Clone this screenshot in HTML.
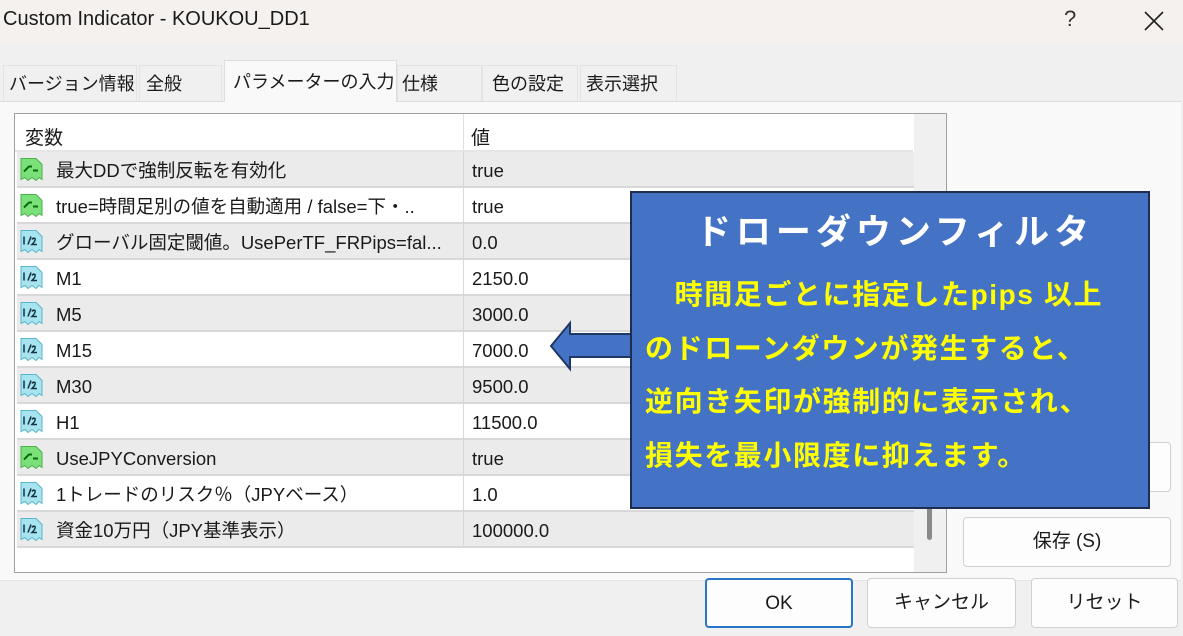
<!DOCTYPE html>
<html><head><meta charset="utf-8"><style>
*{margin:0;padding:0;box-sizing:border-box}
body{width:1183px;height:636px;overflow:hidden;background:#f0f0f0;font-family:"Liberation Sans","Noto Sans CJK JP",sans-serif;position:relative;color:#1a1a1a}
.a{position:absolute}
.title{left:0;top:0;width:1183px;height:45px;background:#f5f1ee}
.tab{position:absolute;top:65px;height:36px;background:#f0f0f0;border:1px solid #e3e3e3;border-bottom:none;font-size:18px;line-height:36px;padding-left:6px;white-space:nowrap;overflow:hidden}
.panel{left:0;top:101px;width:1181px;height:480px;background:#f9f9f9;border-top:1px solid #ddd;border-bottom:1px solid #e6e6e6}
.tbl{left:14px;top:113px;width:933px;height:460px;background:#fff;border:1px solid #a0a0a0}
.row{position:absolute;left:2px;width:897px;height:36px;font-size:18.5px;line-height:38px;border-bottom:2px solid #d8d8d8}
.row .n{position:absolute;left:39px}
.row .v{position:absolute;left:455px}
.row .sep{position:absolute;left:446px;top:0;width:1px;height:36px;background:#d8d8d8}
.g{background:#ebebeb}
.ic{position:absolute;left:3px;top:5px;width:23px;height:25px}
.btn{position:absolute;background:#fdfdfd;border:1px solid #d0d0d0;border-radius:4px;font-size:19px;text-align:center;line-height:48px}
</style></head><body>
<div class="a title"></div>
<div class="a" style="left:3px;top:8px;font-size:20px">Custom Indicator - KOUKOU_DD1</div>
<div class="a" style="left:1064px;top:6px;font-size:22px;color:#333">?</div>
<svg class="a" style="left:1143px;top:10px" width="22" height="22"><path d="M2 2L20 20M20 2L2 20" stroke="#222" stroke-width="1.6"/></svg>

<div class="tab" style="left:3px;width:134px;padding-left:5px">バージョン情報</div>
<div class="tab" style="left:139px;width:83px">全般</div>
<div class="tab" style="left:397px;width:85px;padding-left:4px">仕様</div>
<div class="tab" style="left:482px;width:96px;padding-left:9px">色の設定</div>
<div class="tab" style="left:580px;width:97px;padding-left:5px">表示選択</div>
<div class="a panel"></div>
<div class="tab" style="left:224px;top:60px;height:42px;width:173px;background:#f9f9f9;padding-left:8px;line-height:42px;border-color:#ddd">パラメーターの入力</div>

<div class="a tbl">
<div class="a" style="left:0;top:0;width:898px;height:38px;border-bottom:2px solid #e6e6e6"></div>
<div class="a" style="left:10px;top:9px;font-size:19px">変数</div>
<div class="a" style="left:448px;top:0;width:1px;height:38px;background:#e0e0e0"></div>
<div class="a" style="left:456px;top:9px;font-size:19px">値</div>
<div class="a" style="left:899px;top:0;width:32px;height:458px;background:#f0f0f0"></div>
<div class="a" style="left:912px;top:390px;width:5px;height:36px;background:#8a8a8a;border-radius:3px"></div>
<div id="rows"></div>
</div>

<div class="btn" style="left:963px;top:442px;width:208px;height:50px"></div>
<div class="btn" style="left:963px;top:517px;width:208px;height:50px">保存 (S)</div>
<div class="btn" style="left:705px;top:578px;width:148px;height:50px;border:2px solid #2a74c8">OK</div>
<div class="btn" style="left:867px;top:578px;width:149px;height:50px">キャンセル</div>
<div class="btn" style="left:1031px;top:578px;width:147px;height:50px">リセット</div>

<svg class="a" style="left:548px;top:320px" width="90" height="52"><path d="M3 26L22 3V14H84V37H22V49Z" fill="#4472c4" stroke="#1f3864" stroke-width="2"/></svg>
<div class="a" style="left:630px;top:191px;width:520px;height:318px;background:#4472c4;border:2px solid #1f2d4f"></div>
<div class="a" style="left:630px;top:204px;width:520px;text-align:center;font-size:35px;font-weight:bold;color:#fff;letter-spacing:5px;padding-left:10px">ドローダウンフィルタ</div>
<div class="a" style="left:645px;top:268px;width:520px;font-size:28px;font-weight:bold;color:#ffff00;line-height:53.5px;white-space:nowrap;letter-spacing:1.6px">　時間足ごとに指定したpips 以上<br>のドローンダウンが発生すると、<br>逆向き矢印が強制的に表示され、<br>損失を最小限度に抑えます。</div>

<script>
var G='<path d="M1 1H16L22 7V22L19 20L16 23L12 20L8 23L5 20L1 22Z" fill="#79e07a" stroke="#4cb04c"/><path d="M4 14L9 9H12M13 13H18" stroke="#0a6a0a" stroke-width="2" fill="none"/>';
var B='<path d="M1 1H16L22 7V22L19 20L16 23L12 20L8 23L5 20L1 22Z" fill="#a8e4f0" stroke="#58b5cc"/><path d="M4 7V15M8 15L11 7" stroke="#134" stroke-width="1.5" fill="none"/><path d="M12 10Q13 8 15 9Q16 11 12 15H17" stroke="#134" stroke-width="1.5" fill="none"/>';
var d=[["b","最大DDで強制反転を有効化","true"],["b","true=時間足別の値を自動適用 / false=下・..","true"],["d","グローバル固定閾値。UsePerTF_FRPips=fal...","0.0"],["d","M1","2150.0"],["d","M5","3000.0"],["d","M15","7000.0"],["d","M30","9500.0"],["d","H1","11500.0"],["b","UseJPYConversion","true"],["d","1トレードのリスク％（JPYベース）","1.0"],["d","資金10万円（JPY基準表示）","100000.0"]];
var h="";d.forEach(function(r,i){h+='<div class="row'+(i%2==0?' g':'')+'" style="top:'+(38+i*36)+'px"><svg class="ic" viewBox="0 0 23 24">'+(r[0]=="b"?G:B)+'</svg><span class="n">'+r[1]+'</span><span class="sep"></span><span class="v">'+r[2]+'</span></div>';});
document.getElementById("rows").innerHTML=h;
</script>
</body></html>
